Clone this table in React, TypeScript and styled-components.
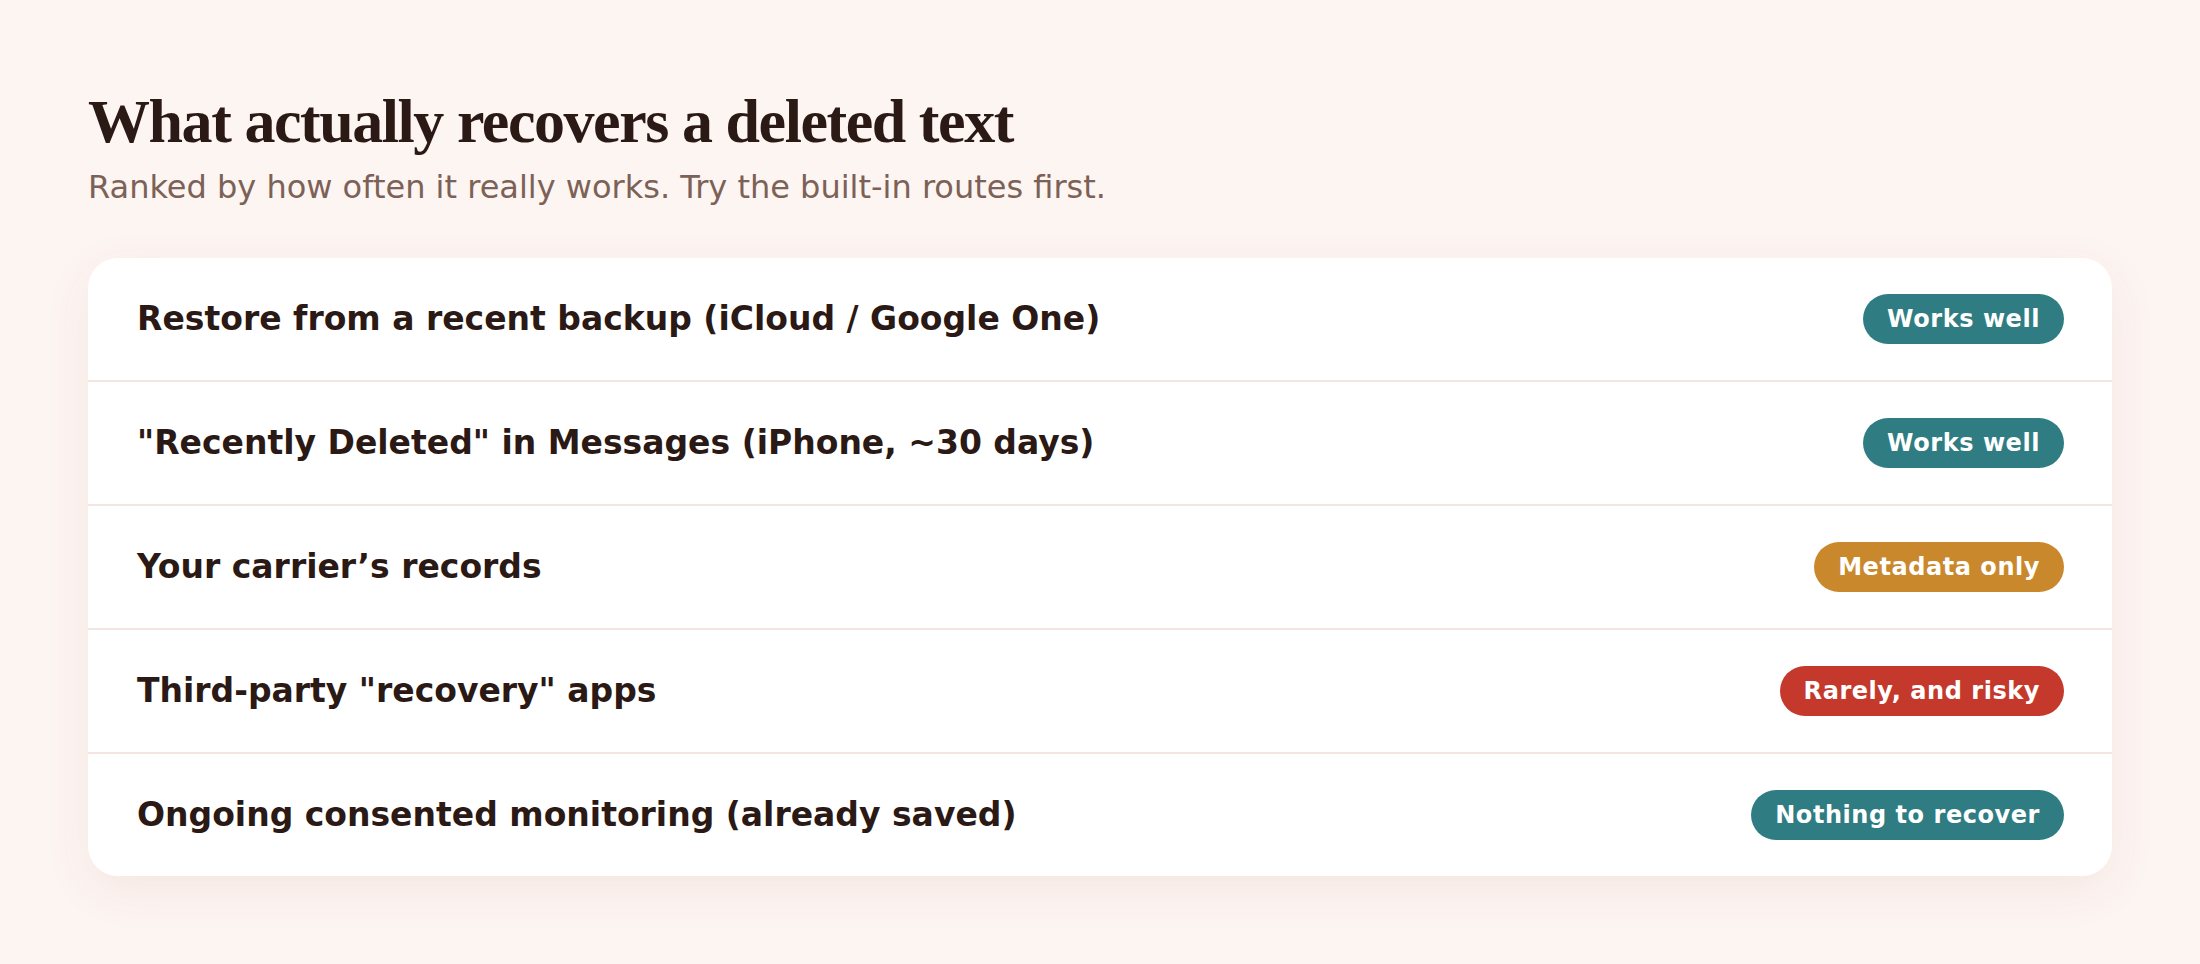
import React from "react";
import styled, { createGlobalStyle } from "styled-components";

const GlobalStyle = createGlobalStyle`
  html, body {
    margin: 0;
    padding: 0;
    background: #fdf5f2;
  }
  body {
    font-family: "DejaVu Sans", "Noto Sans", sans-serif;
    color: #2a1914;
  }
`;

const Page = styled.main`
  padding: 87px 88px 88px;
  box-sizing: border-box;
  min-height: 964px;
`;

const Title = styled.h1`
  margin: 0;
  font-family: "Liberation Serif", "Times New Roman", serif;
  font-weight: 700;
  font-size: 62px;
  line-height: 1.1;
  letter-spacing: -1.45px;
  color: #2a1914;
`;

const Subtitle = styled.p`
  margin: 10px 0 0;
  font-family: "DejaVu Sans", sans-serif;
  font-size: 32px;
  line-height: 1.4;
  color: #7c6157;
`;

const Card = styled.ul`
  list-style: none;
  margin: 48px 0 0;
  padding: 0;
  background: #ffffff;
  border-radius: 30px;
  box-shadow: 0 14px 48px rgba(140, 70, 50, 0.08);
  overflow: hidden;
`;

const Row = styled.li`
  display: flex;
  align-items: center;
  justify-content: space-between;
  gap: 24px;
  height: 122px;
  padding: 0 48px 0 49px;
  box-sizing: border-box;
  & + & {
    border-top: 2px solid #f3e6e1;
    height: 124px;
  }
`;

const Label = styled.span`
  font-family: "DejaVu Sans", sans-serif;
  font-weight: 700;
  font-size: 33px;
  color: #2a1914;
`;

type Tone = "good" | "meta" | "risky";

const toneColors: Record<Tone, string> = {
  good: "#2f7d83",
  meta: "#ca882c",
  risky: "#c4392b",
};

const Badge = styled.span<{ $tone: Tone }>`
  display: inline-block;
  flex-shrink: 0;
  padding: 0 24px;
  height: 50px;
  line-height: 50px;
  border-radius: 25px;
  background: ${(p) => toneColors[p.$tone]};
  color: #ffffff;
  font-family: "DejaVu Sans", sans-serif;
  font-weight: 700;
  font-size: 24px;
  letter-spacing: 0.55px;
  white-space: nowrap;
`;

const rows: { label: string; badge: string; tone: Tone }[] = [
  { label: "Restore from a recent backup (iCloud / Google One)", badge: "Works well", tone: "good" },
  { label: "\"Recently Deleted\" in Messages (iPhone, ~30 days)", badge: "Works well", tone: "good" },
  { label: "Your carrier\u2019s records", badge: "Metadata only", tone: "meta" },
  { label: "Third-party \"recovery\" apps", badge: "Rarely, and risky", tone: "risky" },
  { label: "Ongoing consented monitoring (already saved)", badge: "Nothing to recover", tone: "good" },
];

export default function App() {
  return (
    <>
      <GlobalStyle />
      <Page>
        <Title>What actually recovers a deleted text</Title>
        <Subtitle>Ranked by how often it really works. Try the built-in routes first.</Subtitle>
        <Card>
          {rows.map((r) => (
            <Row key={r.label}>
              <Label>{r.label}</Label>
              <Badge $tone={r.tone}>{r.badge}</Badge>
            </Row>
          ))}
        </Card>
      </Page>
    </>
  );
}
